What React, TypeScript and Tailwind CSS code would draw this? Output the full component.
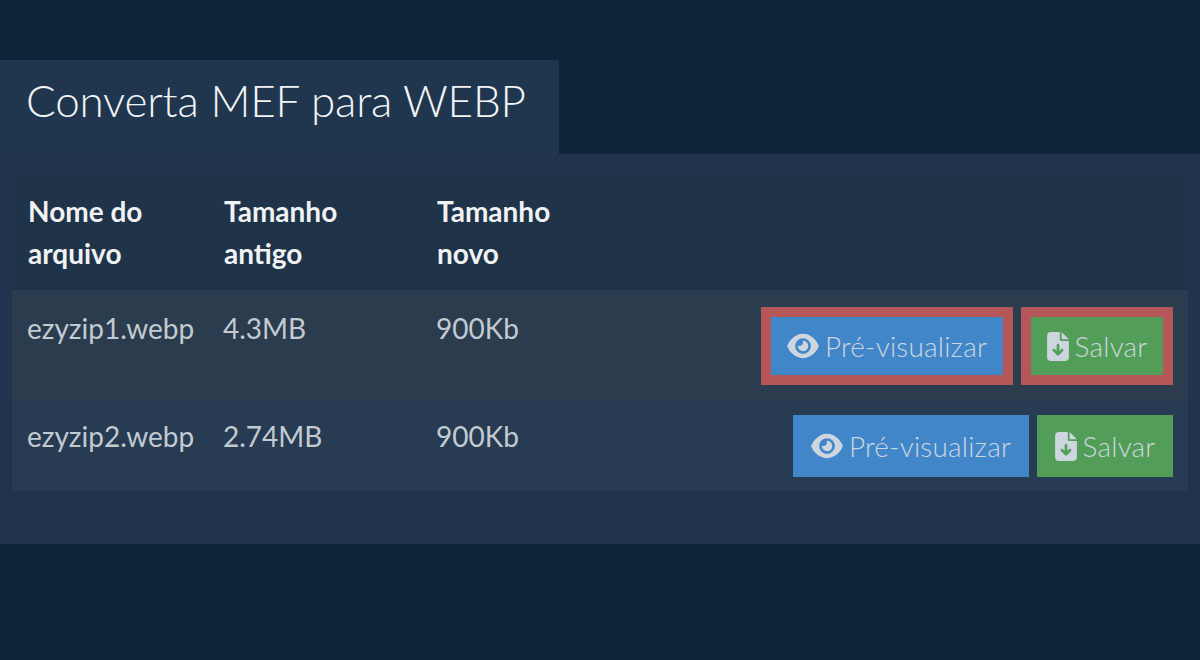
import React from 'react';
import { FaEye, FaFileArrowDown } from 'react-icons/fa6';

const rows = [
  { name: 'ezyzip1.webp', oldSize: '4.3MB', newSize: '900Kb', active: true },
  { name: 'ezyzip2.webp', oldSize: '2.74MB', newSize: '900Kb', active: false },
];

const ActionButton: React.FC<{ active: boolean; green?: boolean; children: React.ReactNode }> = ({ active, green, children }) => (
  <button
    className={`flex h-[62px] items-center justify-center text-[28px] font-light tracking-[0.2px] text-[#cdd6df] ${
      green ? 'bg-[#529e59]' : 'bg-[#4186c9]'
    } ${active ? 'border-[10px] border-[#b55659]' : ''} ${
      green ? (active ? 'w-[152px]' : 'w-[136px]') : active ? 'w-[252px]' : 'w-[236px]'
    } ${active ? 'h-[78px]' : ''}`}
  >
    {children}
  </button>
);

export default function App() {
  return (
    <div className="h-[660px] w-[1200px] overflow-hidden bg-[#0e2439] pt-[60px] font-['Lato',sans-serif]">
      {/* Title tab */}
      <div className="flex h-[94px] w-[559px] items-start bg-[#20364e] pl-[26px] pt-[12px]">
        <h1 className="text-[44px] leading-[56px] font-light tracking-[-0.18px] text-[#f2f4f6]">Converta MEF para WEBP</h1>
      </div>

      {/* Panel */}
      <div className="h-[390px] bg-[#20354d] px-3 pt-5">
        <table className="w-full table-fixed border-collapse">
          <thead>
            <tr className="h-[116px] bg-[#1f3448] text-left align-top text-[28px] leading-[42px] font-bold text-[#f0f2f4]">
              <th className="w-[196px] pl-[16px] pt-4 font-bold">Nome do<br />arquivo</th>
              <th className="w-[212px] pl-[16px] pt-4 font-bold">Tamanho<br />antigo</th>
              <th className="w-[170px] pl-[17px] pt-4 font-bold">Tamanho<br />novo</th>
              <th />
            </tr>
          </thead>
          <tbody>
            {rows.map((row) => {
              const cellTop = row.active ? 'pt-[19px]' : 'pt-[17px]';
              return (
                <tr
                  key={row.name}
                  className={`align-top text-[28px] leading-[38px] text-[#c3cad1] ${
                    row.active ? 'h-[110px] bg-[#2c3c4f]' : 'h-[91px] bg-[#273b52]'
                  }`}
                >
                  <td className={`pl-[15px] ${cellTop}`}>{row.name}</td>
                  <td className={`pl-[15px] ${cellTop}`}>{row.oldSize}</td>
                  <td className={`pl-[16px] ${cellTop}`}>{row.newSize}</td>
                  <td className={`pr-[15px] ${row.active ? 'pt-[17px]' : 'pt-[15px]'}`}>
                    <div className="flex justify-end gap-2">
                      <ActionButton active={row.active}>
                        <FaEye className="mr-[6px] h-[28px] w-[32px]" />
                        Pré-visualizar
                      </ActionButton>
                      <ActionButton active={row.active} green>
                        <FaFileArrowDown className="mr-[6px] h-[29px] w-[22px]" />
                        Salvar
                      </ActionButton>
                    </div>
                  </td>
                </tr>
              );
            })}
          </tbody>
        </table>
      </div>
    </div>
  );
}
